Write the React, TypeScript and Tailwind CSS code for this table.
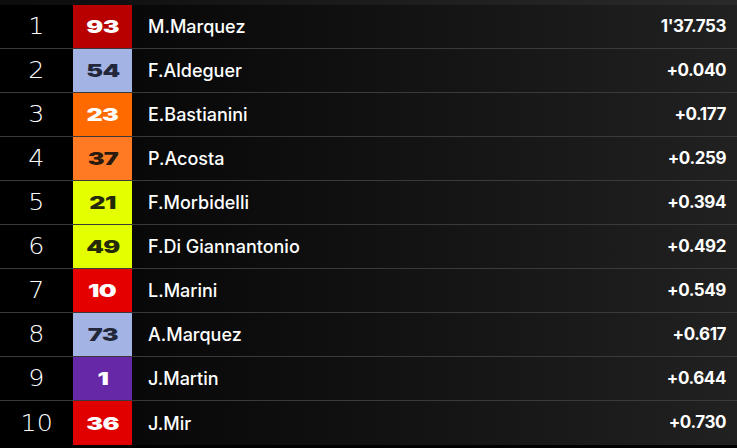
const rows = [
  { pos: 1, num: "93", name: "M.Marquez", time: "1'37.753", box: "bg-[#b80000]", txt: "text-white" },
  { pos: 2, num: "54", name: "F.Aldeguer", time: "+0.040", box: "bg-[#a3b3e3]", txt: "text-[#22283a]" },
  { pos: 3, num: "23", name: "E.Bastianini", time: "+0.177", box: "bg-[#ff6a00]", txt: "text-white" },
  { pos: 4, num: "37", name: "P.Acosta", time: "+0.259", box: "bg-[#ff7a22]", txt: "text-[#2a1a10]" },
  { pos: 5, num: "21", name: "F.Morbidelli", time: "+0.394", box: "bg-[#e4ff00]", txt: "text-[#242a08]" },
  { pos: 6, num: "49", name: "F.Di Giannantonio", time: "+0.492", box: "bg-[#e4ff00]", txt: "text-[#242a08]" },
  { pos: 7, num: "10", name: "L.Marini", time: "+0.549", box: "bg-[#e50000]", txt: "text-white" },
  { pos: 8, num: "73", name: "A.Marquez", time: "+0.617", box: "bg-[#a3b3e3]", txt: "text-[#22283a]" },
  { pos: 9, num: "1", name: "J.Martin", time: "+0.644", box: "bg-[#6628a6]", txt: "text-white" },
  { pos: 10, num: "36", name: "J.Mir", time: "+0.730", box: "bg-[#e00000]", txt: "text-white" },
];

export default function App() {
  return (
    <div className="w-[737px] h-[448px] overflow-hidden bg-black font-['Inter',sans-serif]">
      <div className="h-[5px] bg-gradient-to-r from-[#0c0c0c] via-[#1c1c1c] to-[#2a2a2a]" />
      {rows.map((r, i) => (
        <div
          key={r.pos}
          className={
            "flex h-[44px] " + (i < rows.length - 1 ? "border-b border-[#3a3a3a]" : "")
          }
        >
          <div className="w-[73px] shrink-0 flex items-center justify-center bg-black text-white text-[23px] font-light font-['DejaVu_Sans',sans-serif]">
            <span className="inline-block scale-x-110">{r.pos}</span>
          </div>
          <div
            className={
              "w-[59px] shrink-0 flex items-center justify-center text-[18px] font-black " +
              r.box +
              " " +
              r.txt
            }
          >
            <span className="inline-block scale-x-[1.4] tracking-tight">{r.num}</span>
          </div>
          <div className="flex-1 flex items-center justify-between pl-[16px] pr-[11px] bg-gradient-to-r from-[#080808] to-[#212121]">
            <span className="text-white text-[18px] font-medium">{r.name}</span>
            <span className="text-white text-[17px] font-bold tracking-tight">{r.time}</span>
          </div>
        </div>
      ))}
    </div>
  );
}
